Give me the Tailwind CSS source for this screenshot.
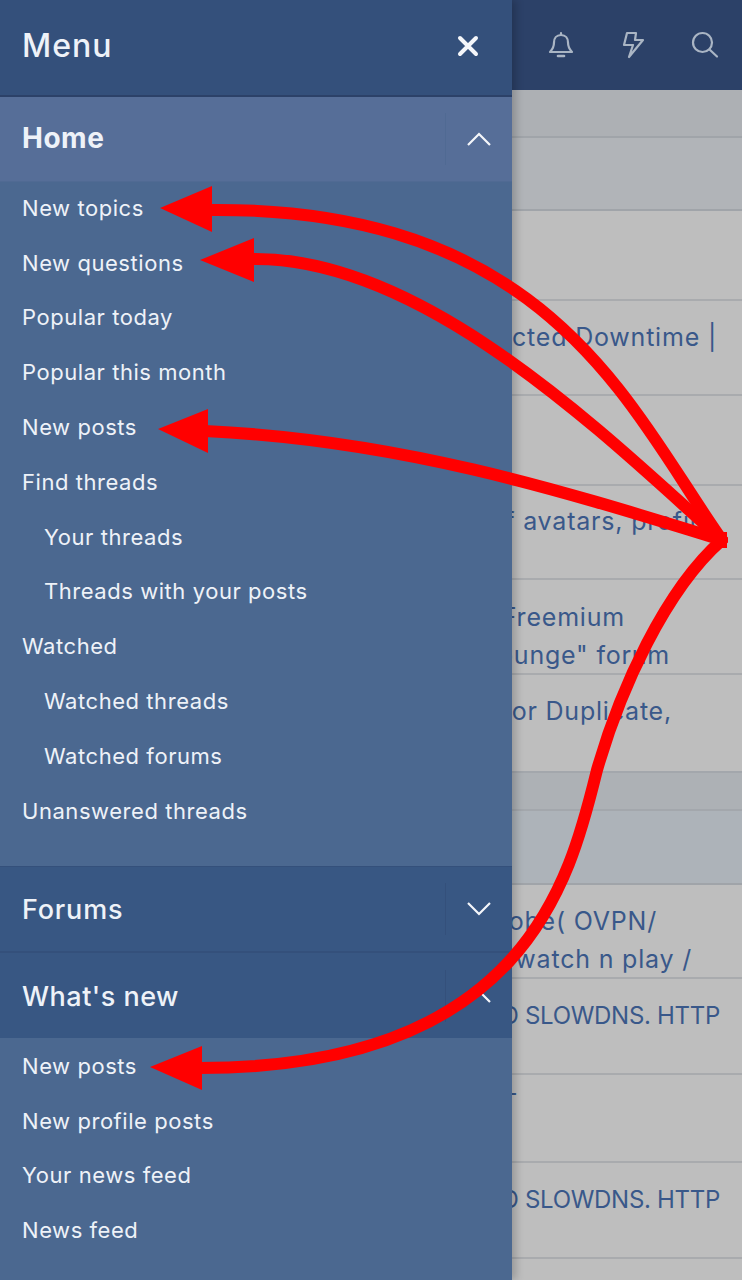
<!DOCTYPE html>
<html lang="en">
<head>
  <meta charset="UTF-8" />
  <meta name="viewport" content="width=device-width, initial-scale=1.0" />
  <title>Menu</title>
  <script src="https://cdn.jsdelivr.net/npm/@tailwindcss/browser@4"></script>
</head>
<body class="bg-[#bebebe] font-['Inter',sans-serif]">
<div class="relative w-[742px] h-[1280px] overflow-hidden">

  <!-- page behind the drawer -->
  <div class="text-[#39588a] text-[25px] tracking-[0.8px] leading-[38px] whitespace-nowrap text-right">
    <header class="h-[90px] bg-[#2c4168] flex items-center justify-end gap-[47.5px] pr-[23px] text-[#aab5c4]">
      <svg class="w-[26px] h-[30px]" viewBox="0 0 26 30" fill="none" stroke="currentColor" stroke-width="2.2" stroke-linejoin="round" stroke-linecap="round">
        <path d="M13 3v2M13 5c-4.600 0-7 3.400-7 7.500 0 5-1.600 7-4 9.500h22c-2.400-2.500-4-4.500-4-9.500C20 8.400 17.600 5 13 5z"/>
        <path d="M10 26h6" stroke-width="2.600"/>
      </svg>
      <svg class="w-[22px] h-[30px]" viewBox="0 0 22 30" fill="none" stroke="currentColor" stroke-width="2.2" stroke-linejoin="round">
        <path d="M5 3H14L13 10H21L7 27L11 15H2Z"/>
      </svg>
      <svg class="w-[28px] h-[28px]" viewBox="0 0 28 28" fill="none" stroke="currentColor" stroke-width="2.2" stroke-linecap="round">
        <circle cx="11.500" cy="11.500" r="9.500"/>
        <path d="M18.500 18.500l7.500 7"/>
      </svg>
    </header>

    <div class="h-[48px] bg-[#adb0b4] border-b-2 border-[#a0a4a9]"></div>
    <div class="h-[73px] bg-[#b1b4b8] border-b-2 border-[#a0a4a9]"></div>
    <div class="h-[90px] border-b-2 border-[#a9abae]"></div>
    <div class="h-[95px] pt-[17px] pr-[25px] border-b-2 border-[#a9abae]">Unexpected Downtime |</div>
    <div class="h-[90px] border-b-2 border-[#a9abae]"></div>
    <div class="h-[94px] pt-[16px] pr-[30px] border-b-2 border-[#a9abae]">List of avatars, profile</div>
    <div class="h-[95px] pt-[18px] border-b-2 border-[#a9abae]">
      <span class="block pr-[117px]">Freemium</span>
      <span class="block pr-[72px]">Lounge" forum</span>
    </div>
    <div class="h-[96px] pt-[17px] pr-[70px]">for Duplicate,</div>
    <div class="h-[40px] bg-[#adb1b5] border-t-2 border-b-2 border-[#a3a7ac]"></div>
    <div class="h-[74px] bg-[#adb3b9] border-b-2 border-[#a0a4a9]"></div>
    <div class="h-[94px] pt-[17px] border-b-2 border-[#a9abae]">
      <span class="block pr-[85px]">Probe( OVPN/</span>
      <span class="block pr-[50px]">watch n play /</span>
    </div>
    <div class="h-[96px] pt-[18px] pr-[22px] text-[24px] tracking-[-0.3px] border-b-2 border-[#a9abae]">AND SLOWDNS. HTTP</div>
    <div class="h-[88px] pt-[9px] pr-[224px] border-b-2 border-[#a9abae]">PORT</div>
    <div class="h-[96px] pt-[18px] pr-[22px] text-[24px] tracking-[-0.3px] border-b-2 border-[#a9abae]">AND SLOWDNS. HTTP</div>
  </div>

  <!-- slide-out drawer -->
  <nav class="absolute inset-y-0 left-0 w-[512px] bg-[#4b6890] text-[#eef2f8] shadow-[4px_0_8px_rgba(0,0,0,0.2)]">
    <div class="h-[97px] pb-[3px] bg-[#34507b] border-b-2 border-[#2c4168] flex items-center justify-between pl-[22px] pr-[33px]">
      <span class="text-[32px] tracking-[1px] font-medium">Menu</span>
      <svg class="w-[22px] h-[22px]" viewBox="0 0 22 22" fill="none" stroke="#f4f6fa" stroke-width="4" stroke-linecap="round">
        <path d="M3 3l16 16M19 3L3 19"/>
      </svg>
    </div>

    <div class="h-[85px] bg-[#566e98] border-b border-[#506a93] flex items-center pl-[22px]">
      <span class="flex-1 pb-[2px] text-[28px] tracking-[0.5px] font-bold">Home</span>
      <span class="w-[67px] h-[52px] border-l border-[#506a93] flex items-center justify-center">
        <svg class="w-[24px] h-[14px]" viewBox="0 0 24 14" fill="none" stroke="#f4f6fa" stroke-width="2.200"><path d="M1 13L12 2l11 11"/></svg>
      </span>
    </div>

    <ul class="text-[22px] tracking-[0.55px] -mt-[1px] h-[685px] pl-[22px]">
      <li class="h-[54.800px] flex items-center">New topics</li>
      <li class="h-[54.800px] flex items-center">New questions</li>
      <li class="h-[54.800px] flex items-center">Popular today</li>
      <li class="h-[54.800px] flex items-center">Popular this month</li>
      <li class="h-[54.800px] flex items-center">New posts</li>
      <li class="h-[54.800px] flex items-center">Find threads</li>
      <li class="h-[54.800px] flex items-center pl-[22px]">Your threads</li>
      <li class="h-[54.800px] flex items-center pl-[22px]">Threads with your posts</li>
      <li class="h-[54.800px] flex items-center">Watched</li>
      <li class="h-[54.800px] flex items-center pl-[22px]">Watched threads</li>
      <li class="h-[54.800px] flex items-center pl-[22px]">Watched forums</li>
      <li class="h-[54.800px] flex items-center">Unanswered threads</li>
    </ul>

    <div class="h-[87px] bg-[#385783] border-t border-[#34507b] border-b-2 flex items-center pl-[22px]">
      <span class="flex-1 pt-[3px] text-[27px] tracking-[0.8px] font-medium">Forums</span>
      <span class="w-[67px] h-[52px] border-l border-[#34507b] flex items-center justify-center">
        <svg class="w-[24px] h-[14px]" viewBox="0 0 24 14" fill="none" stroke="#f4f6fa" stroke-width="2.200"><path d="M1 1l11 11L23 1"/></svg>
      </span>
    </div>
    <div class="h-[85px] bg-[#385783] flex items-center pl-[22px]">
      <span class="flex-1 pt-[3px] text-[27px] tracking-[0.5px] font-medium">What's new</span>
      <span class="w-[67px] h-[52px] border-l border-[#34507b] flex items-center justify-center">
        <svg class="w-[24px] h-[14px]" viewBox="0 0 24 14" fill="none" stroke="#f4f6fa" stroke-width="2.200"><path d="M1 13L12 2l11 11"/></svg>
      </span>
    </div>

    <ul class="text-[22px] tracking-[0.55px] pt-[1px] pl-[22px]">
      <li class="h-[54.800px] flex items-center">New posts</li>
      <li class="h-[54.800px] flex items-center">New profile posts</li>
      <li class="h-[54.800px] flex items-center">Your news feed</li>
      <li class="h-[54.800px] flex items-center">News feed</li>
    </ul>
  </nav>

  <!-- red annotation arrows -->
  <svg class="absolute inset-0 w-[742px] h-[1280px]" viewBox="0 0 742 1280" fill="none" stroke="#ff0000" stroke-width="12" stroke-linecap="round">
    <path d="M722 540C630 410 550 205 205 210"/>
    <path d="M722 540C600 430 420 255 250 259"/>
    <path d="M722 540C560 490 400 440 205 431"/>
    <path d="M722 540C665 590 620 690 597 770C570 880 525 1068 200 1068"/>
    <path fill="#ff0000" stroke="none" d="M160 208L212 186V232z"/>
    <path fill="#ff0000" stroke="none" d="M200 260L254 238V282z"/>
    <path fill="#ff0000" stroke="none" d="M158 429L208 409V453z"/>
    <path fill="#ff0000" stroke="none" d="M150 1067L202 1046V1090z"/>
    <rect x="714" y="532" width="13" height="16" fill="#ff0000" stroke="none"/>
  </svg>
</div>
</body>
</html>
